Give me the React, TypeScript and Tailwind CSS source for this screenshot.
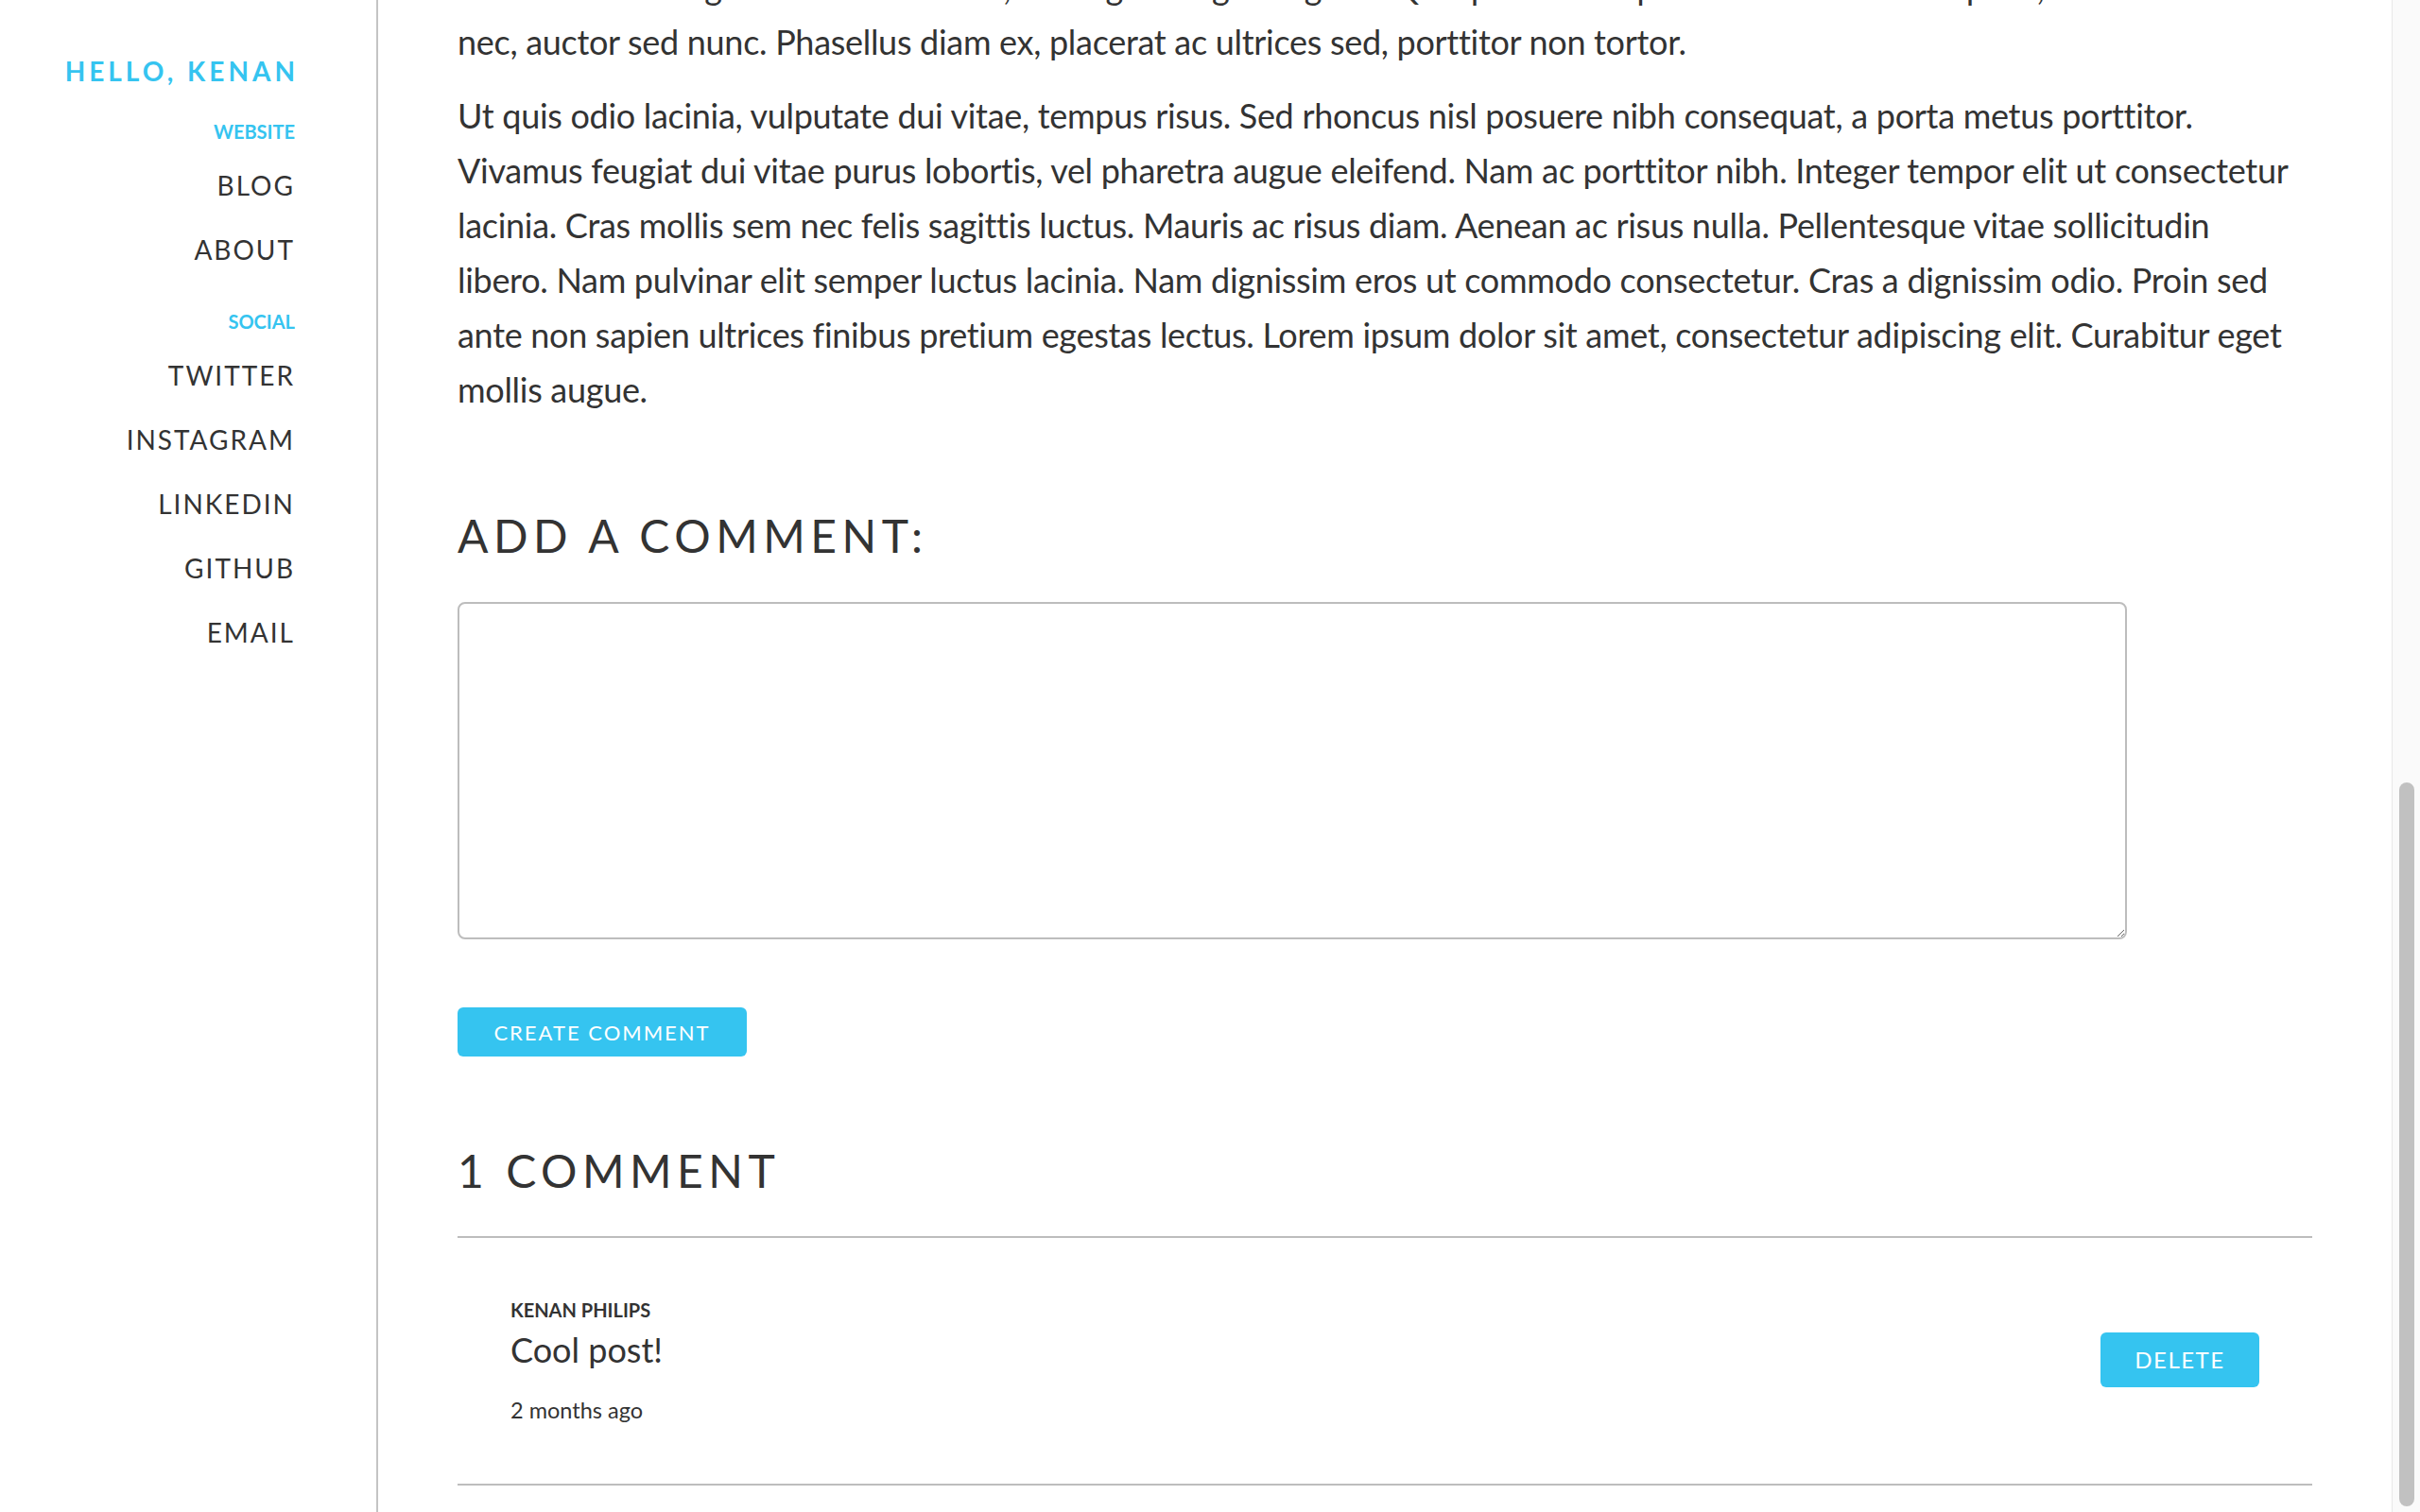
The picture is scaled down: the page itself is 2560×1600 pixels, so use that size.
export default function App() {
  const nav = "block text-[28px] leading-[68px] tracking-[2px] text-[#333]";
  const label = "block text-[20px] leading-[20px] font-bold text-[#35c4f0]";
  const body = "text-[36px] leading-[58px] tracking-[-0.3px] text-[#333]";
  const heading = "text-[48px] leading-none tracking-[5.5px] font-normal text-[#333]";
  return (
    <div className="flex h-[1600px] w-full overflow-hidden bg-white font-['Lato',sans-serif] text-[#333]">
      <aside className="w-[400px] shrink-0 border-r-2 border-[#c4c4c4] pr-[86px] pt-[61px] text-right">
        <div className="mr-[-4px] text-[28px] leading-[28px] font-bold tracking-[4px] text-[#35c4f0]">HELLO, KENAN</div>
        <div className={`${label} mt-[40px]`}>WEBSITE</div>
        <nav className="mt-[13px]">
          <a className={nav}>BLOG</a>
          <a className={nav}>ABOUT</a>
        </nav>
        <div className={`${label} mt-[32px]`}>SOCIAL</div>
        <nav className="mt-[13px]">
          <a className={nav}>TWITTER</a>
          <a className={nav}>INSTAGRAM</a>
          <a className={nav}>LINKEDIN</a>
          <a className={nav}>GITHUB</a>
          <a className={nav}>EMAIL</a>
        </nav>
      </aside>

      <main className="min-w-0 flex-1 overflow-hidden px-[84px]">
        <div className="mt-[-43px]">
          <p className={`${body} whitespace-nowrap`}>
            Morbi ultrices augue at velit tincidunt, ut feugiat magna sagittis. Quisque vel est quis mauris efficitur aliquam, at ultricies
            <br />
            nec, auctor sed nunc. Phasellus diam ex, placerat ac ultrices sed, porttitor non tortor.
          </p>
          <p className={`${body} mt-[20px] whitespace-nowrap`}>
            Ut quis odio lacinia, vulputate dui vitae, tempus risus. Sed rhoncus nisl posuere nibh consequat, a porta metus porttitor.
            <br />
            Vivamus feugiat dui vitae purus lobortis, vel pharetra augue eleifend. Nam ac porttitor nibh. Integer tempor elit ut consectetur
            <br />
            lacinia. Cras mollis sem nec felis sagittis luctus. Mauris ac risus diam. Aenean ac risus nulla. Pellentesque vitae sollicitudin
            <br />
            libero. Nam pulvinar elit semper luctus lacinia. Nam dignissim eros ut commodo consectetur. Cras a dignissim odio. Proin sed
            <br />
            ante non sapien ultrices finibus pretium egestas lectus. Lorem ipsum dolor sit amet, consectetur adipiscing elit. Curabitur eget
            <br />
            mollis augue.
          </p>

          <h2 className={`${heading} mt-[102px]`}>ADD A COMMENT:</h2>
          <textarea className="mt-[46px] block h-[357px] w-[90%] rounded-[8px] border-2 border-[#bdbdbd] bg-white p-2 text-[28px] outline-none" />
          <button className="mt-[72px] block h-[52px] w-[306px] rounded-[6px] bg-[#35c4f0] text-[22px] tracking-[2px] text-white">
            CREATE COMMENT
          </button>

          <h2 className={`${heading} mt-[97px]`}>1 COMMENT</h2>
          <div className="mt-[45px] flex h-[264px] items-center justify-between border-y-2 border-[#bdbdbd] px-[56px]">
            <div className="flex flex-col">
              <div className="text-[20px] leading-[20px] font-bold text-[#333]">KENAN PHILIPS</div>
              <div className="mt-[14px] text-[36px] leading-[36px] text-[#333]">Cool post!</div>
              <div className="mt-[35px] text-[23.5px] leading-[23px] text-[#333]">2 months ago</div>
            </div>
            <button className="mb-[2px] h-[58px] w-[168px] rounded-[6px] bg-[#35c4f0] text-[24px] tracking-[1.5px] text-white">DELETE</button>
          </div>
        </div>
      </main>

      <div className="w-[30px] shrink-0 border-l border-[#e8e8e8] bg-[#fafafa] pl-[7px] pt-[828px]">
        <div className="h-[766px] w-[16px] rounded-full bg-[#c1c1c1]" />
      </div>
    </div>
  );
}
